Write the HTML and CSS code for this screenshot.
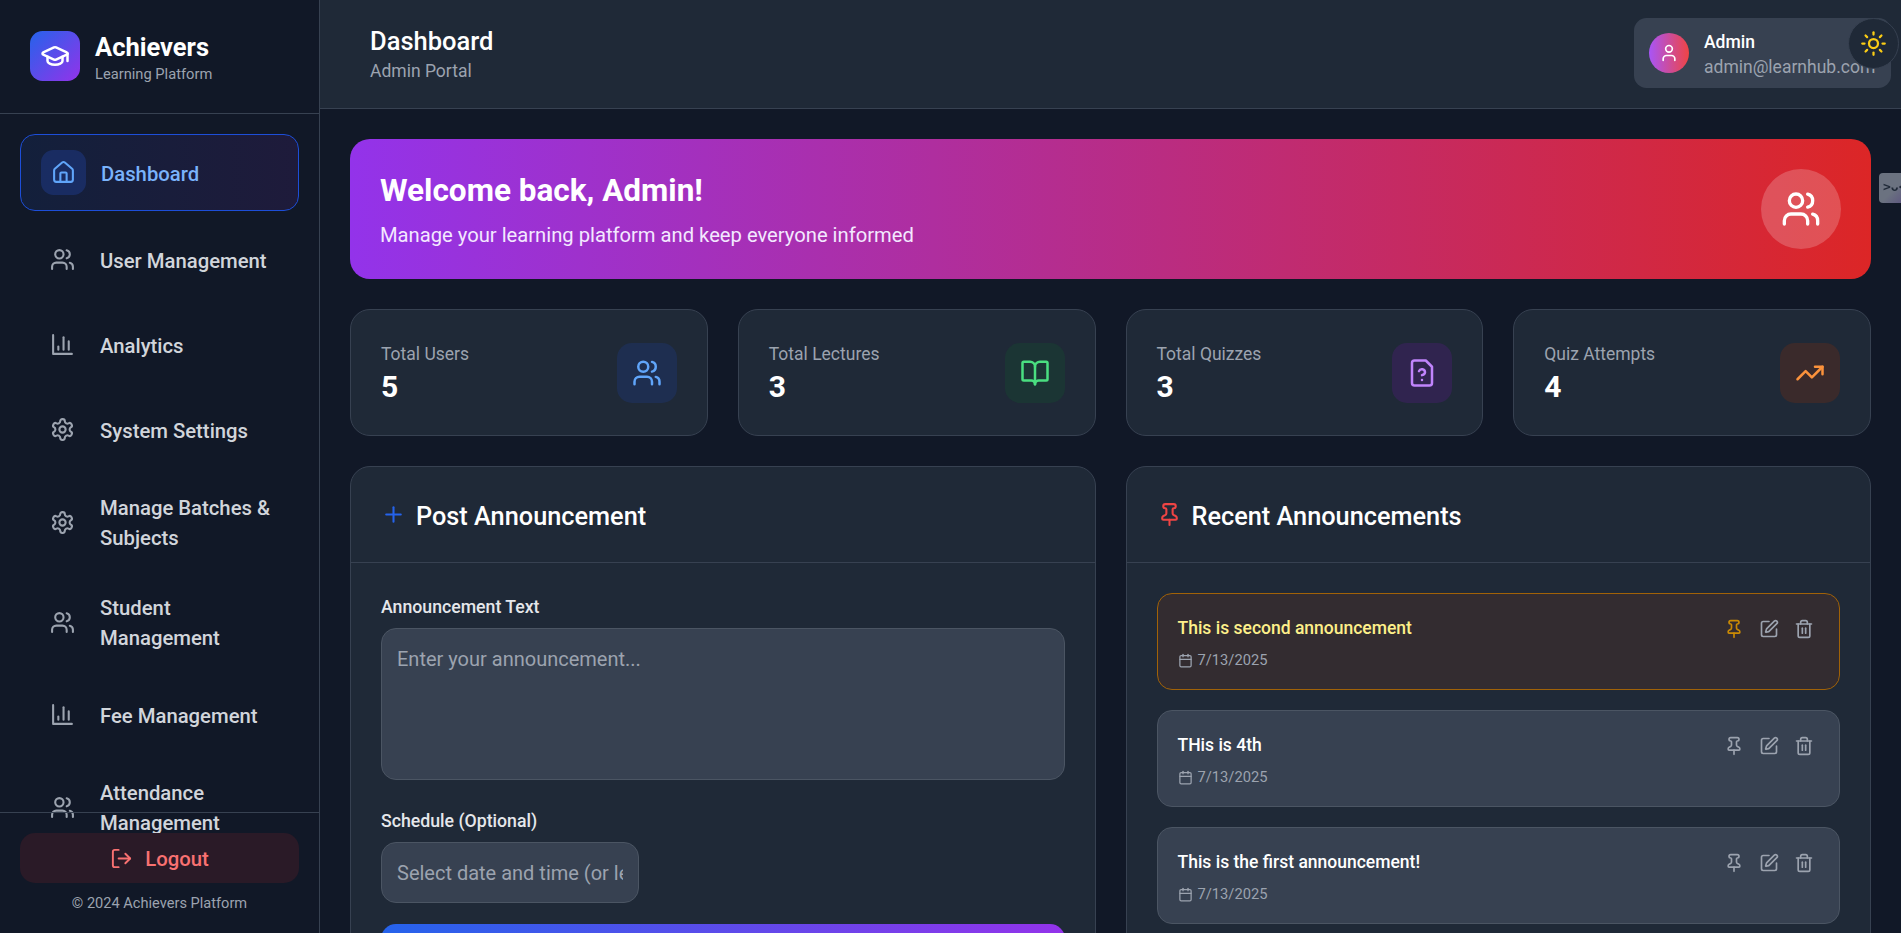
FILE: index.html
```html
<!DOCTYPE html>
<html lang="en">
  <head>
    <meta charset="UTF-8" />
    <meta name="viewport" content="width=device-width, initial-scale=1.0" />
    <title>Achievers - Admin</title>
    <link rel="stylesheet" href="styles.css">
  </head>
  <body>
    <svg class="sprite" xmlns="http://www.w3.org/2000/svg">
      <symbol id="i-cap" viewBox="0 0 24 24"><path d="M21.42 10.92a1 1 0 0 0-.02-1.84l-8.57-3.9a2 2 0 0 0-1.66 0l-8.57 3.9a1 1 0 0 0 0 1.83l8.57 3.91a2 2 0 0 0 1.66 0z"/><path d="M22 10v6"/><path d="M6 12.5V16a6 3 0 0 0 12 0v-3.5"/></symbol>
      <symbol id="i-home" viewBox="0 0 24 24"><path d="M15 21v-8a1 1 0 0 0-1-1h-4a1 1 0 0 0-1 1v8"/><path d="M3 10a2 2 0 0 1 .71-1.53l7-6a2 2 0 0 1 2.58 0l7 6A2 2 0 0 1 21 10v9a2 2 0 0 1-2 2H5a2 2 0 0 1-2-2z"/></symbol>
      <symbol id="i-users" viewBox="0 0 24 24"><path d="M16 21v-2a4 4 0 0 0-4-4H6a4 4 0 0 0-4 4v2"/><circle cx="9" cy="7" r="4"/><path d="M22 21v-2a4 4 0 0 0-3-3.87"/><path d="M16 3.13a4 4 0 0 1 0 7.75"/></symbol>
      <symbol id="i-chart" viewBox="0 0 24 24"><path d="M3 3v18h18"/><path d="M18 17V9"/><path d="M13 17V5"/><path d="M8 17v-3"/></symbol>
      <symbol id="i-gear" viewBox="0 0 24 24"><path d="M12.22 2h-.44a2 2 0 0 0-2 2v.18a2 2 0 0 1-1 1.73l-.43.25a2 2 0 0 1-2 0l-.15-.08a2 2 0 0 0-2.73.73l-.22.38a2 2 0 0 0 .73 2.73l.15.1a2 2 0 0 1 1 1.72v.51a2 2 0 0 1-1 1.74l-.15.09a2 2 0 0 0-.73 2.73l.22.38a2 2 0 0 0 2.73.73l.15-.08a2 2 0 0 1 2 0l.43.25a2 2 0 0 1 1 1.73V20a2 2 0 0 0 2 2h.44a2 2 0 0 0 2-2v-.18a2 2 0 0 1 1-1.73l.43-.25a2 2 0 0 1 2 0l.15.08a2 2 0 0 0 2.73-.73l.22-.39a2 2 0 0 0-.73-2.73l-.15-.08a2 2 0 0 1-1-1.74v-.5a2 2 0 0 1 1-1.74l.15-.09a2 2 0 0 0 .73-2.73l-.22-.38a2 2 0 0 0-2.73-.73l-.15.08a2 2 0 0 1-2 0l-.43-.25a2 2 0 0 1-1-1.73V4a2 2 0 0 0-2-2z"/><circle cx="12" cy="12" r="3"/></symbol>
      <symbol id="i-logout" viewBox="0 0 24 24"><path d="M9 21H5a2 2 0 0 1-2-2V5a2 2 0 0 1 2-2h4"/><path d="M16 17l5-5-5-5"/><path d="M21 12H9"/></symbol>
      <symbol id="i-user" viewBox="0 0 24 24"><path d="M19 21v-2a4 4 0 0 0-4-4H9a4 4 0 0 0-4 4v2"/><circle cx="12" cy="7" r="4"/></symbol>
      <symbol id="i-sun" viewBox="0 0 24 24"><circle cx="12" cy="12" r="4"/><path d="M12 2v2"/><path d="M12 20v2"/><path d="m4.93 4.93 1.41 1.41"/><path d="m17.66 17.66 1.41 1.41"/><path d="M2 12h2"/><path d="M20 12h2"/><path d="m6.34 17.66-1.41 1.41"/><path d="m19.07 4.93-1.41 1.41"/></symbol>
      <symbol id="i-book" viewBox="0 0 24 24"><path d="M12 7v14"/><path d="M3 18a1 1 0 0 1-1-1V4a1 1 0 0 1 1-1h5a4 4 0 0 1 4 4 4 4 0 0 1 4-4h5a1 1 0 0 1 1 1v13a1 1 0 0 1-1 1h-6a3 3 0 0 0-3 3 3 3 0 0 0-3-3z"/></symbol>
      <symbol id="i-quiz" viewBox="0 0 24 24"><path d="M12 17.500h.01"/><path d="M15 2H6a2 2 0 0 0-2 2v16a2 2 0 0 0 2 2h12a2 2 0 0 0 2-2V7z"/><path d="M9.600 10.500a2.500 2.500 0 0 1 4.800.8c0 1.600-2.400 2.400-2.400 2.400"/></symbol>
      <symbol id="i-trend" viewBox="0 0 24 24"><path d="M22 7l-8.500 8.500-5-5L2 17"/><path d="M16 7h6v6"/></symbol>
      <symbol id="i-plus" viewBox="0 0 24 24"><path d="M5 12h14"/><path d="M12 5v14"/></symbol>
      <symbol id="i-pin" viewBox="0 0 24 24"><path d="M12 17v5"/><path d="M9 10.76a2 2 0 0 1-1.11 1.79l-1.78.9A2 2 0 0 0 5 15.24V16a1 1 0 0 0 1 1h12a1 1 0 0 0 1-1v-.76a2 2 0 0 0-1.11-1.79l-1.78-.9A2 2 0 0 1 15 10.76V7a1 1 0 0 1 1-1 2 2 0 0 0 0-4H8a2 2 0 0 0 0 4 1 1 0 0 1 1 1z"/></symbol>
      <symbol id="i-edit" viewBox="0 0 24 24"><path d="M12 3H5a2 2 0 0 0-2 2v14a2 2 0 0 0 2 2h14a2 2 0 0 0 2-2v-7"/><path d="M18.375 2.625a1 1 0 0 1 3 3l-9.013 9.014a2 2 0 0 1-.853.505l-2.873.84a.5.5 0 0 1-.62-.62l.84-2.873a2 2 0 0 1 .506-.852z"/></symbol>
      <symbol id="i-trash" viewBox="0 0 24 24"><path d="M3 6h18"/><path d="M19 6v14c0 1-1 2-2 2H7c-1 0-2-1-2-2V6"/><path d="M8 6V4c0-1 1-2 2-2h4c1 0 2 1 2 2v2"/><path d="M10 11v6"/><path d="M14 11v6"/></symbol>
      <symbol id="i-cal" viewBox="0 0 24 24"><path d="M8 2v4"/><path d="M16 2v4"/><rect x="3" y="4" width="18" height="18" rx="2"/><path d="M3 10h18"/></symbol>
    </svg>

    <div class="layout">
      <aside class="sidebar">
        <div class="brand">
          <div class="brand-logo"><svg class="icon icon-30"><use href="#i-cap"/></svg></div>
          <div class="brand-text">
            <div class="brand-name">Achievers</div>
            <div class="brand-sub">Learning Platform</div>
          </div>
        </div>

        <nav class="nav">
          <a class="nav-item active"><span class="nav-icon"><svg class="icon icon-25"><use href="#i-home"/></svg></span><span class="nav-label">Dashboard</span></a>
          <a class="nav-item"><span class="nav-icon"><svg class="icon icon-25"><use href="#i-users"/></svg></span><span class="nav-label">User Management</span></a>
          <a class="nav-item"><span class="nav-icon"><svg class="icon icon-25"><use href="#i-chart"/></svg></span><span class="nav-label">Analytics</span></a>
          <a class="nav-item"><span class="nav-icon"><svg class="icon icon-25"><use href="#i-gear"/></svg></span><span class="nav-label">System Settings</span></a>
          <a class="nav-item"><span class="nav-icon"><svg class="icon icon-25"><use href="#i-gear"/></svg></span><span class="nav-label">Manage Batches &amp; Subjects</span></a>
          <a class="nav-item"><span class="nav-icon"><svg class="icon icon-25"><use href="#i-users"/></svg></span><span class="nav-label">Student Management</span></a>
          <a class="nav-item"><span class="nav-icon"><svg class="icon icon-25"><use href="#i-chart"/></svg></span><span class="nav-label">Fee Management</span></a>
          <a class="nav-item"><span class="nav-icon"><svg class="icon icon-25"><use href="#i-users"/></svg></span><span class="nav-label">Attendance Management</span></a>
        </nav>

        <div class="sidebar-foot">
          <button class="logout"><svg class="icon icon-23"><use href="#i-logout"/></svg><span class="logout-label">Logout</span></button>
          <div class="copy">© 2024 Achievers Platform</div>
        </div>
      </aside>

      <div class="content">
        <header class="topbar">
          <div>
            <div class="page-title">Dashboard</div>
            <div class="page-sub">Admin Portal</div>
          </div>
          <div class="user-card">
            <div class="avatar"><svg class="icon icon-20"><use href="#i-user"/></svg></div>
            <div class="user-text">
              <div class="user-name">Admin</div>
              <div class="user-mail">admin@learnhub.com</div>
            </div>
          </div>
        </header>

        <main class="main">
          <section class="banner">
            <div class="banner-text">
              <h1>Welcome back, Admin!</h1>
              <p>Manage your learning platform and keep everyone informed</p>
            </div>
            <div class="banner-icon"><svg class="icon icon-40"><use href="#i-users"/></svg></div>
          </section>

          <section class="stats">
            <div class="stat">
              <div class="stat-text"><div class="stat-label">Total Users</div><div class="stat-value">5</div></div>
              <div class="stat-icon blue"><svg class="icon icon-30"><use href="#i-users"/></svg></div>
            </div>
            <div class="stat">
              <div class="stat-text"><div class="stat-label">Total Lectures</div><div class="stat-value">3</div></div>
              <div class="stat-icon green"><svg class="icon icon-30"><use href="#i-book"/></svg></div>
            </div>
            <div class="stat">
              <div class="stat-text"><div class="stat-label">Total Quizzes</div><div class="stat-value">3</div></div>
              <div class="stat-icon purple"><svg class="icon icon-30"><use href="#i-quiz"/></svg></div>
            </div>
            <div class="stat">
              <div class="stat-text"><div class="stat-label">Quiz Attempts</div><div class="stat-value">4</div></div>
              <div class="stat-icon orange"><svg class="icon icon-30"><use href="#i-trend"/></svg></div>
            </div>
          </section>

          <section class="panels">
            <div class="panel">
              <div class="panel-head">
                <svg class="icon icon-25 text-blue"><use href="#i-plus"/></svg>
                <h2>Post Announcement</h2>
              </div>
              <form class="panel-body">
                <label for="annText">Announcement Text</label>
                <textarea id="annText" placeholder="Enter your announcement..."></textarea>
                <label class="label-2" for="annDate">Schedule (Optional)</label>
                <input id="annDate" type="text" placeholder="Select date and time (or leave empty)" />
                <button class="submit" type="button">Post Announcement</button>
              </form>
            </div>

            <div class="panel">
              <div class="panel-head">
                <svg class="icon icon-25 text-red"><use href="#i-pin"/></svg>
                <h2>Recent Announcements</h2>
              </div>
              <div class="panel-body ann-list">
                <div class="ann pinned">
                  <div>
                    <div class="ann-text">This is second announcement</div>
                    <div class="ann-date"><svg class="icon icon-15"><use href="#i-cal"/></svg>7/13/2025</div>
                  </div>
                  <div class="ann-actions">
                    <svg class="icon icon-20 pin-on"><use href="#i-pin"/></svg>
                    <svg class="icon icon-20"><use href="#i-edit"/></svg>
                    <svg class="icon icon-20"><use href="#i-trash"/></svg>
                  </div>
                </div>
                <div class="ann">
                  <div>
                    <div class="ann-text">THis is 4th</div>
                    <div class="ann-date"><svg class="icon icon-15"><use href="#i-cal"/></svg>7/13/2025</div>
                  </div>
                  <div class="ann-actions">
                    <svg class="icon icon-20"><use href="#i-pin"/></svg>
                    <svg class="icon icon-20"><use href="#i-edit"/></svg>
                    <svg class="icon icon-20"><use href="#i-trash"/></svg>
                  </div>
                </div>
                <div class="ann">
                  <div>
                    <div class="ann-text">This is the first announcement!</div>
                    <div class="ann-date"><svg class="icon icon-15"><use href="#i-cal"/></svg>7/13/2025</div>
                  </div>
                  <div class="ann-actions">
                    <svg class="icon icon-20"><use href="#i-pin"/></svg>
                    <svg class="icon icon-20"><use href="#i-edit"/></svg>
                    <svg class="icon icon-20"><use href="#i-trash"/></svg>
                  </div>
                </div>
              </div>
            </div>
          </section>
        </main>
      </div>
    </div>

    <button class="theme-toggle"><svg class="icon icon-27"><use href="#i-sun"/></svg></button>
    <div class="dev-tab">&gt;ᴗ&lt;</div>
  </body>
</html>
```

FILE: styles.css
```css
* {
  box-sizing: border-box;
}
html,
body {
  height: 100%;
  margin: 0;
  overflow: hidden;
}
body {
  font-family: Roboto, "Noto Sans", sans-serif;
  font-size: 17.5px;
  background-color: #111827;
  color: #fff;
}
.sprite {
  display: none;
}
.icon {
  fill: none;
  stroke: currentColor;
  stroke-width: 2;
  stroke-linecap: round;
  stroke-linejoin: round;
  flex-shrink: 0;
}
.icon-15 { width: 15px; height: 15px; }
.icon-20 { width: 20px; height: 20px; }
.icon-23 { width: 23px; height: 23px; }
.icon-25 { width: 25px; height: 25px; }
.icon-27 { width: 27px; height: 27px; }
.icon-30 { width: 30px; height: 30px; }
.icon-40 { width: 40px; height: 40px; }

.layout {
  display: flex;
  height: 100vh;
}

/* sidebar */
.sidebar {
  position: relative;
  width: 320px;
  flex-shrink: 0;
  overflow: hidden;
  border-right: 1px solid #374151;
  background-color: #111827;
}
.brand {
  display: flex;
  align-items: center;
  gap: 15px;
  height: 114px;
  padding: 0 30px 1px;
  border-bottom: 1px solid #374151;
}
.brand-logo {
  display: flex;
  align-items: center;
  justify-content: center;
  width: 50px;
  height: 50px;
  border-radius: 12.5px;
  background: linear-gradient(135deg, #2563eb, #9333ea);
}
.brand-text {
  padding-top: 3px;
}
.brand-name {
  font-size: 25.5px;
  font-weight: 700;
  line-height: 33px;
}
.brand-sub {
  font-size: 14.7px;
  line-height: 20px;
  color: #9ca3af;
}
.nav {
  display: flex;
  flex-direction: column;
  gap: 10px;
  padding: 20px;
}
.nav-item {
  display: flex;
  align-items: center;
  gap: 15px;
  padding: 15px 20px;
  border-radius: 15px;
  font-size: 20.3px;
  font-weight: 500;
  line-height: 30px;
  color: #d1d5db;
}
.nav-label {
  margin-top: 1px;
  margin-bottom: -1px;
}
.nav-item.active {
  margin-bottom: 1px;
  border: 1px solid #1d4ed8;
  background: linear-gradient(to right, rgba(37, 99, 235, 0.1), rgba(147, 51, 234, 0.1));
  color: #7ab3fb;
}
.nav-icon {
  display: flex;
  align-items: center;
  justify-content: center;
  width: 45px;
  height: 45px;
  flex-shrink: 0;
  border-radius: 12.5px;
  color: #9ca3af;
}
.active .nav-icon {
  background-color: rgba(30, 58, 138, 0.5);
  color: #60a5fa;
}
.sidebar-foot {
  position: absolute;
  left: 0;
  right: 0;
  top: 812px;
  padding: 20px;
  border-top: 1px solid #374151;
}
.logout {
  display: flex;
  align-items: center;
  justify-content: center;
  gap: 12px;
  width: 100%;
  height: 50px;
  border: none;
  border-radius: 15px;
  background-color: #2a1a27;
  color: #f87171;
  font-family: inherit;
  font-size: 20.3px;
  font-weight: 500;
}
.logout-label {
  padding-top: 2px;
}
.copy {
  margin-top: 10px;
  font-size: 14.6px;
  line-height: 20px;
  text-align: center;
  color: #9ca3af;
}

/* top bar */
.content {
  flex: 1;
  min-width: 0;
  display: flex;
  flex-direction: column;
}
.topbar {
  display: flex;
  align-items: center;
  justify-content: space-between;
  height: 109px;
  flex-shrink: 0;
  padding: 0 10px 0 50px;
  border-bottom: 1px solid #374151;
  background-color: #1f2937;
}
.page-title {
  font-size: 25.5px;
  font-weight: 500;
  line-height: 35px;
}
.page-sub {
  font-size: 17.5px;
  line-height: 25px;
  color: #9ca3af;
}
.user-card {
  display: flex;
  align-items: center;
  gap: 15px;
  width: 257px;
  height: 70px;
  margin-bottom: 2px;
  padding: 0 15px;
  border-radius: 12.5px;
  background-color: #374151;
  overflow: hidden;
}
.avatar {
  display: flex;
  align-items: center;
  justify-content: center;
  width: 40px;
  height: 40px;
  flex-shrink: 0;
  border-radius: 50%;
  background: linear-gradient(to right, #a855f7, #ef4444);
}
.user-text {
  padding-top: 3px;
}
.user-name {
  font-size: 17.5px;
  font-weight: 500;
  line-height: 25px;
}
.user-mail {
  font-size: 17.5px;
  line-height: 25px;
  color: #9ca3af;
  white-space: nowrap;
}

/* main */
.main {
  flex: 1;
  min-height: 0;
  padding: 30px;
  overflow: hidden;
}
.banner {
  display: flex;
  align-items: center;
  justify-content: space-between;
  height: 140px;
  padding: 0 30px;
  border-radius: 20px;
  background: linear-gradient(to right, #9333ea, #dc2626);
}
.banner-text {
  padding-top: 2px;
}
.banner h1 {
  margin: 0 0 11px;
  font-size: 31.5px;
  font-weight: 700;
  line-height: 38px;
}
.banner p {
  margin: 0;
  font-size: 20.2px;
  line-height: 28px;
  color: #f3e8ff;
}
.banner-icon {
  display: flex;
  align-items: center;
  justify-content: center;
  width: 80px;
  height: 80px;
  border-radius: 50%;
  background-color: rgba(255, 255, 255, 0.2);
}
.stats {
  display: grid;
  grid-template-columns: repeat(4, 1fr);
  gap: 30px;
  margin-top: 30px;
}
.stat {
  display: flex;
  align-items: center;
  justify-content: space-between;
  height: 127px;
  padding: 0 30px;
  border: 1px solid #374151;
  border-radius: 20px;
  background-color: #1f2937;
}
.stat-text {
  padding-top: 4px;
}
.stat-label {
  font-size: 17.5px;
  line-height: 25px;
  color: #9ca3af;
}
.stat-value {
  font-size: 30px;
  font-weight: 700;
  line-height: 40px;
}
.stat-icon {
  display: flex;
  align-items: center;
  justify-content: center;
  width: 60px;
  height: 60px;
  border-radius: 15px;
}
.blue { background-color: rgba(30, 58, 138, 0.3); color: #60a5fa; }
.green { background-color: rgba(20, 83, 45, 0.3); color: #4ade80; }
.purple { background-color: rgba(88, 28, 135, 0.3); color: #c084fc; }
.orange { background-color: rgba(124, 45, 18, 0.3); color: #fb923c; }

.panels {
  display: grid;
  grid-template-columns: repeat(2, 1fr);
  gap: 30px;
  margin-top: 30px;
}
.panel {
  border: 1px solid #374151;
  border-radius: 20px;
  background-color: #1f2937;
}
.panel-head {
  display: flex;
  align-items: center;
  gap: 10px;
  height: 96px;
  padding: 0 30px;
  border-bottom: 1px solid #374151;
}
.panel-head h2 {
  margin: 0;
  padding-top: 3px;
  font-size: 25.3px;
  font-weight: 500;
}
.text-blue { color: #2563eb; }
.text-red { color: #ef4444; }
.panel-body {
  padding: 30px;
}
.panel-body label {
  display: block;
  padding-top: 2px;
  margin-bottom: 8px;
  font-size: 17.7px;
  font-weight: 500;
  line-height: 25px;
  color: #e5e7eb;
}
.panel-body .label-2 {
  margin-top: 27px;
}
textarea,
input {
  display: block;
  border: 1px solid #4b5563;
  border-radius: 15px;
  background-color: #374151;
  color: #fff;
  font-family: inherit;
  font-size: 20px;
}
textarea {
  width: 100%;
  height: 152px;
  padding: 18px 15px;
  resize: none;
}
input {
  width: 258px;
  height: 61px;
  padding: 0 15px;
}
textarea::placeholder,
input::placeholder {
  color: #9ca3af;
}
.submit {
  display: block;
  width: 100%;
  height: 55px;
  margin-top: 21px;
  border: none;
  border-radius: 15px;
  background: linear-gradient(to right, #2563eb, #9333ea);
  color: #fff;
  font-family: inherit;
  font-size: 20px;
  font-weight: 500;
}

/* announcements */
.ann-list {
  display: flex;
  flex-direction: column;
  gap: 20px;
}
.ann {
  display: flex;
  align-items: flex-start;
  justify-content: space-between;
  height: 97px;
  padding: 20px 25px 0 20px;
  border: 1px solid #4b5563;
  border-radius: 15px;
  background-color: #374151;
}
.ann.pinned {
  border-color: #a16207;
  background-color: #332c30;
}
.ann-text {
  padding-top: 2px;
  font-size: 17.5px;
  font-weight: 500;
  line-height: 25px;
}
.pinned .ann-text {
  color: #fef08a;
}
.ann-date {
  display: flex;
  align-items: center;
  gap: 5px;
  margin-top: 9px;
  font-size: 14.7px;
  line-height: 20px;
  color: #9ca3af;
}
.ann-actions {
  display: flex;
  gap: 15px;
  margin-top: 5px;
  color: #9ca3af;
}
.ann-actions .pin-on {
  color: #ca8a04;
}

/* floating bits */
.theme-toggle {
  position: fixed;
  top: 18px;
  right: 2px;
  display: flex;
  align-items: center;
  justify-content: center;
  width: 51px;
  height: 51px;
  padding: 0;
  border: 1px solid #374151;
  border-radius: 50%;
  background-color: #1f2937;
  color: #facc15;
}
.dev-tab {
  position: fixed;
  top: 173px;
  right: 0;
  width: 22px;
  height: 30px;
  overflow: hidden;
  padding-left: 4px;
  border-radius: 4px 0 0 4px;
  background: linear-gradient(135deg, #6b7280 60%, #5f5a80);
  color: #1f2937;
  font-family: "DejaVu Sans Mono", monospace;
  font-size: 13px;
  font-weight: 700;
  line-height: 28px;
  white-space: nowrap;
}
```
